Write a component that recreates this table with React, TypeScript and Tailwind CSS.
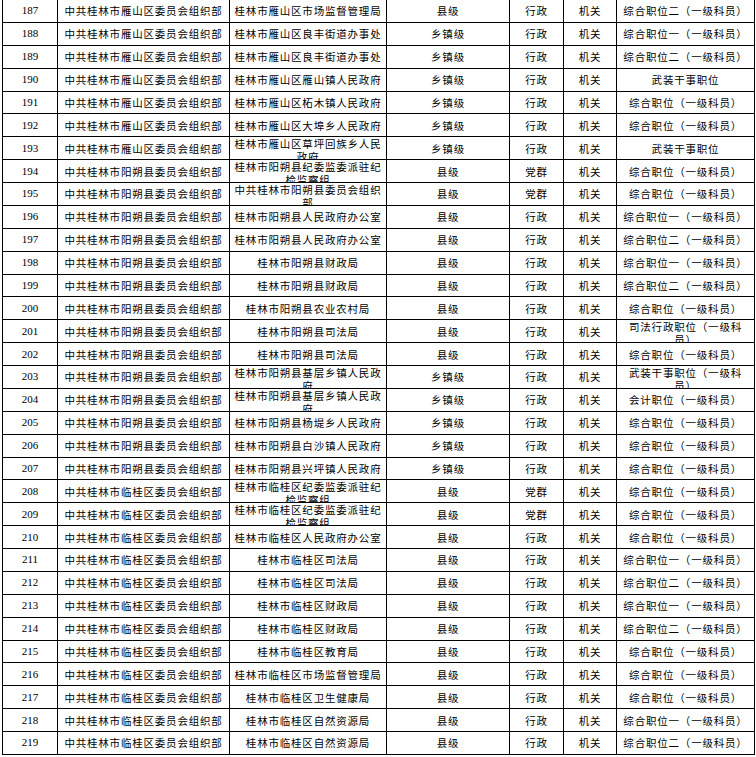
const YS = '中共桂林市雁山区委员会组织部';
const YSH = '中共桂林市阳朔县委员会组织部';
const LG = '中共桂林市临桂区委员会组织部';

type Row = [number, string, string, string, string, string, string];

const rows: Row[] = [
  [187, YS, '桂林市雁山区市场监督管理局', '县级', '行政', '机关', '综合职位二（一级科员）'],
  [188, YS, '桂林市雁山区良丰街道办事处', '乡镇级', '行政', '机关', '综合职位一（一级科员）'],
  [189, YS, '桂林市雁山区良丰街道办事处', '乡镇级', '行政', '机关', '综合职位二（一级科员）'],
  [190, YS, '桂林市雁山区雁山镇人民政府', '乡镇级', '行政', '机关', '武装干事职位'],
  [191, YS, '桂林市雁山区柘木镇人民政府', '乡镇级', '行政', '机关', '综合职位（一级科员）'],
  [192, YS, '桂林市雁山区大埠乡人民政府', '乡镇级', '行政', '机关', '综合职位（一级科员）'],
  [193, YS, '桂林市雁山区草坪回族乡人民政府', '乡镇级', '行政', '机关', '武装干事职位'],
  [194, YSH, '桂林市阳朔县纪委监委派驻纪检监察组', '县级', '党群', '机关', '综合职位（一级科员）'],
  [195, YSH, '中共桂林市阳朔县委员会组织部', '县级', '党群', '机关', '综合职位（一级科员）'],
  [196, YSH, '桂林市阳朔县人民政府办公室', '县级', '行政', '机关', '综合职位一（一级科员）'],
  [197, YSH, '桂林市阳朔县人民政府办公室', '县级', '行政', '机关', '综合职位二（一级科员）'],
  [198, YSH, '桂林市阳朔县财政局', '县级', '行政', '机关', '综合职位一（一级科员）'],
  [199, YSH, '桂林市阳朔县财政局', '县级', '行政', '机关', '综合职位二（一级科员）'],
  [200, YSH, '桂林市阳朔县农业农村局', '县级', '行政', '机关', '综合职位（一级科员）'],
  [201, YSH, '桂林市阳朔县司法局', '县级', '行政', '机关', '司法行政职位（一级科员）'],
  [202, YSH, '桂林市阳朔县司法局', '县级', '行政', '机关', '综合职位（一级科员）'],
  [203, YSH, '桂林市阳朔县基层乡镇人民政府', '乡镇级', '行政', '机关', '武装干事职位（一级科员）'],
  [204, YSH, '桂林市阳朔县基层乡镇人民政府', '乡镇级', '行政', '机关', '会计职位（一级科员）'],
  [205, YSH, '桂林市阳朔县杨堤乡人民政府', '乡镇级', '行政', '机关', '综合职位（一级科员）'],
  [206, YSH, '桂林市阳朔县白沙镇人民政府', '乡镇级', '行政', '机关', '综合职位（一级科员）'],
  [207, YSH, '桂林市阳朔县兴坪镇人民政府', '乡镇级', '行政', '机关', '综合职位（一级科员）'],
  [208, LG, '桂林市临桂区纪委监委派驻纪检监察组', '县级', '党群', '机关', '综合职位（一级科员）'],
  [209, LG, '桂林市临桂区纪委监委派驻纪检监察组', '县级', '党群', '机关', '综合职位（一级科员）'],
  [210, LG, '桂林市临桂区人民政府办公室', '县级', '行政', '机关', '综合职位（一级科员）'],
  [211, LG, '桂林市临桂区司法局', '县级', '行政', '机关', '综合职位一（一级科员）'],
  [212, LG, '桂林市临桂区司法局', '县级', '行政', '机关', '综合职位二（一级科员）'],
  [213, LG, '桂林市临桂区财政局', '县级', '行政', '机关', '综合职位一（一级科员）'],
  [214, LG, '桂林市临桂区财政局', '县级', '行政', '机关', '综合职位二（一级科员）'],
  [215, LG, '桂林市临桂区教育局', '县级', '行政', '机关', '综合职位（一级科员）'],
  [216, LG, '桂林市临桂区市场监督管理局', '县级', '行政', '机关', '综合职位（一级科员）'],
  [217, LG, '桂林市临桂区卫生健康局', '县级', '行政', '机关', '综合职位（一级科员）'],
  [218, LG, '桂林市临桂区自然资源局', '县级', '行政', '机关', '综合职位一（一级科员）'],
  [219, LG, '桂林市临桂区自然资源局', '县级', '行政', '机关', '综合职位二（一级科员）'],
];

function Cell({ children, className = '' }: { children: React.ReactNode; className?: string }) {
  return (
    <div
      className={`flex flex-col [justify-content:safe_center] overflow-hidden border-r border-black text-center ${className}`}
    >
      {children}
    </div>
  );
}

export default function App() {
  return (
    <div className="min-h-[757px] bg-white pl-[2px] text-black">
      <div className="w-[753px] border-l border-black font-['Noto_Sans_CJK_SC',sans-serif] text-[10.5px] leading-[13px] tracking-[0.8px] [text-spacing-trim:space-all]">
        {rows.map(([no, unit, dept, level, kind, org, post]) => (
          <div
            key={no}
            className="grid h-[22.88px] grid-cols-[55px_172px_157px_123px_54px_53px_138px] border-b border-black"
          >
            <Cell className="font-['Liberation_Serif',serif] text-[11px] tracking-normal">{no}</Cell>
            <Cell className="px-[2px]">{unit}</Cell>
            <Cell className="px-[2px]">{dept}</Cell>
            <Cell>{level}</Cell>
            <Cell>{kind}</Cell>
            <Cell>{org}</Cell>
            <Cell className="px-[3px]">{post}</Cell>
          </div>
        ))}
      </div>
    </div>
  );
}
